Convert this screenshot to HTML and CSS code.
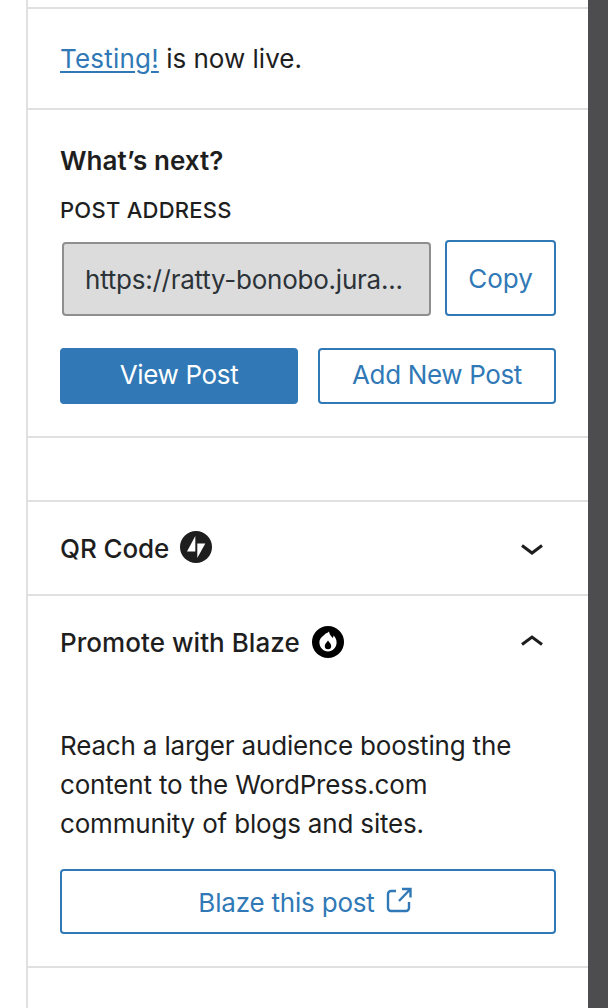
FILE: index.html
```html
<!DOCTYPE html>
<html lang="en">
<head>
<meta charset="utf-8">
<title>Post published</title>
<link rel="stylesheet" href="styles.css">
</head>
<body>
<div class="page">
  <aside class="panel">
    <div class="section top"></div>
    <div class="section live"><a class="link" href="#">Testing!</a> is now live.</div>
    <div class="section next">
      <h2 class="next-title">What’s next?</h2>
      <div class="label">POST ADDRESS</div>
      <div class="address-row">
        <div class="address"><span class="address-text">https://ratty-bonobo.jura...</span></div>
        <button class="btn copy">Copy</button>
      </div>
      <div class="action-row">
        <button class="btn primary">View Post</button>
        <button class="btn">Add New Post</button>
      </div>
    </div>
    <div class="section gap"></div>
    <div class="section row-section">
      <div class="row">
        <span class="row-title qr-title">QR Code</span>
        <svg class="badge qr-badge" viewBox="0 0 32 32"><circle cx="16" cy="16" r="16" fill="#1e1e1e"/><path d="M15.300 5v15.500H7z" fill="#fff"/><path d="M17.300 27V12.500h8z" fill="#fff"/></svg>
        <svg class="chev chev-down" viewBox="0 0 24 12"><path d="M2 1.500l10 7.500 10-7.500" fill="none" stroke="#1e1e1e" stroke-width="3"/></svg>
      </div>
    </div>
    <div class="section blaze">
      <div class="row">
        <span class="row-title blaze-title">Promote with Blaze</span>
        <svg class="badge" viewBox="0 0 32 32"><circle cx="16" cy="16" r="16" fill="#000"/><path d="M17 5.500c.5 3.500 2.500 4.800 3.800 6.500.5-.8.700-1.500.8-2.400 1.900 2 3 4.300 3 7 0 5-3.900 8.900-8.600 8.900s-8.600-3.900-8.600-8.900c0-4.800 4.500-6.800 6.300-9 1.300-.5 2.500-1.200 3.300-2.100z" fill="#fff"/><path d="M16 14.500c1.400 2 3.200 3.500 3.200 5.500a3.200 3.200 0 0 1-6.400 0c0-2 1.800-3.500 3.200-5.500z" fill="#000"/></svg>
        <svg class="chev" viewBox="0 0 24 12"><path d="M2 10.500l10-7.500 10 7.500" fill="none" stroke="#1e1e1e" stroke-width="3"/></svg>
      </div>
      <p class="blurb">Reach a larger audience boosting the content to the WordPress.com community of blogs and sites.</p>
      <button class="btn wide"><span class="wide-text">Blaze this post</span>
        <svg class="ext" viewBox="0 0 26 26"><path d="M10 4H5a3 3 0 0 0-3 3v14a3 3 0 0 0 3 3h15a3 3 0 0 0 3-3v-6" fill="none" stroke="#3079b6" stroke-width="2.400"/><path d="M13 14L24 2.500M16 2h8.500v8.500" fill="none" stroke="#3079b6" stroke-width="2.400"/></svg>
      </button>
    </div>
  </aside>
  <div class="scrollbar"></div>
</div>
</body>
</html>
```
FILE: styles.css
```css
* { box-sizing: border-box; }
html, body { margin: 0; height: 100%; overflow: hidden; background: #fff; }
body { font-family: Inter, "Liberation Sans", sans-serif; color: #1e1e1e; font-size: 26px; }
.page { display: flex; height: 1008px; padding-left: 26px; }
.panel { width: 562px; border-left: 2px solid #e0e0e0; }
.scrollbar { width: 20px; background: #4d4d4f; }
.section { border-bottom: 2px solid #e0e0e0; }
.top { height: 9px; }
.live { height: 101px; padding: 32px 0 0 32px; line-height: 36px; }
.link { color: #3079b6; text-decoration: underline; text-decoration-thickness: 2px; text-underline-offset: 3px; letter-spacing: 0.2px; }
.next { height: 328px; padding: 33px 32px 0 32px; }
.next-title { margin: 0; font-size: 26px; font-weight: 600; line-height: 36px; letter-spacing: 0.08px; }
.label { margin-top: 18px; font-size: 22px; font-weight: 500; line-height: 26px; letter-spacing: 0.25px; }
.address-row { display: flex; align-items: flex-end; margin-top: 17px; padding-left: 2px; gap: 14px; }
.address { width: 369px; height: 74px; padding-left: 21px; background: #dcdcdc; border: 2px solid #8f8f8f; border-radius: 4px; line-height: 72px; color: #2c3338; font-size: 26px; white-space: nowrap; letter-spacing: -0.24px; }
.btn { font: inherit; color: #3079b6; background: #fff; border: 2px solid #3079b6; border-radius: 4px; padding: 0; cursor: pointer; }
.copy { width: 111px; height: 76px; }
.action-row { display: flex; gap: 20px; margin-top: 32px; }
.action-row .btn { width: 238px; height: 56px; padding-bottom: 3px; letter-spacing: -0.35px; }
.action-row .primary { background: #3079b6; color: #fff; }
.gap { height: 64px; }
.row-section { height: 94px; }
.row { display: flex; align-items: center; height: 92px; padding: 0 44px 0 32px; }
.row-title { font-weight: 500; font-size: 26px; }
.qr-title { letter-spacing: -0.1px; }
.blaze-title { letter-spacing: 0.05px; }
.badge { width: 32px; height: 32px; margin-left: 12px; }
.qr-badge { margin-left: 11px; margin-bottom: 2px; }
.chev { width: 24px; height: 12px; margin-left: auto; margin-bottom: 4px; }
.chev-down { margin-bottom: 0; margin-top: 3px; }
.blaze { height: 372px; }
.blurb { margin: 38px 32px 0 32px; line-height: 39px; font-size: 26px; letter-spacing: -0.18px; }
.wide { display: flex; align-items: center; justify-content: center; gap: 11px; width: 496px; height: 65px; margin: 26px 0 0 32px; padding-right: 6px; letter-spacing: -0.2px; }
.wide-text { padding-top: 2px; }
.ext { width: 26px; height: 26px; margin-bottom: 3px; }
```
